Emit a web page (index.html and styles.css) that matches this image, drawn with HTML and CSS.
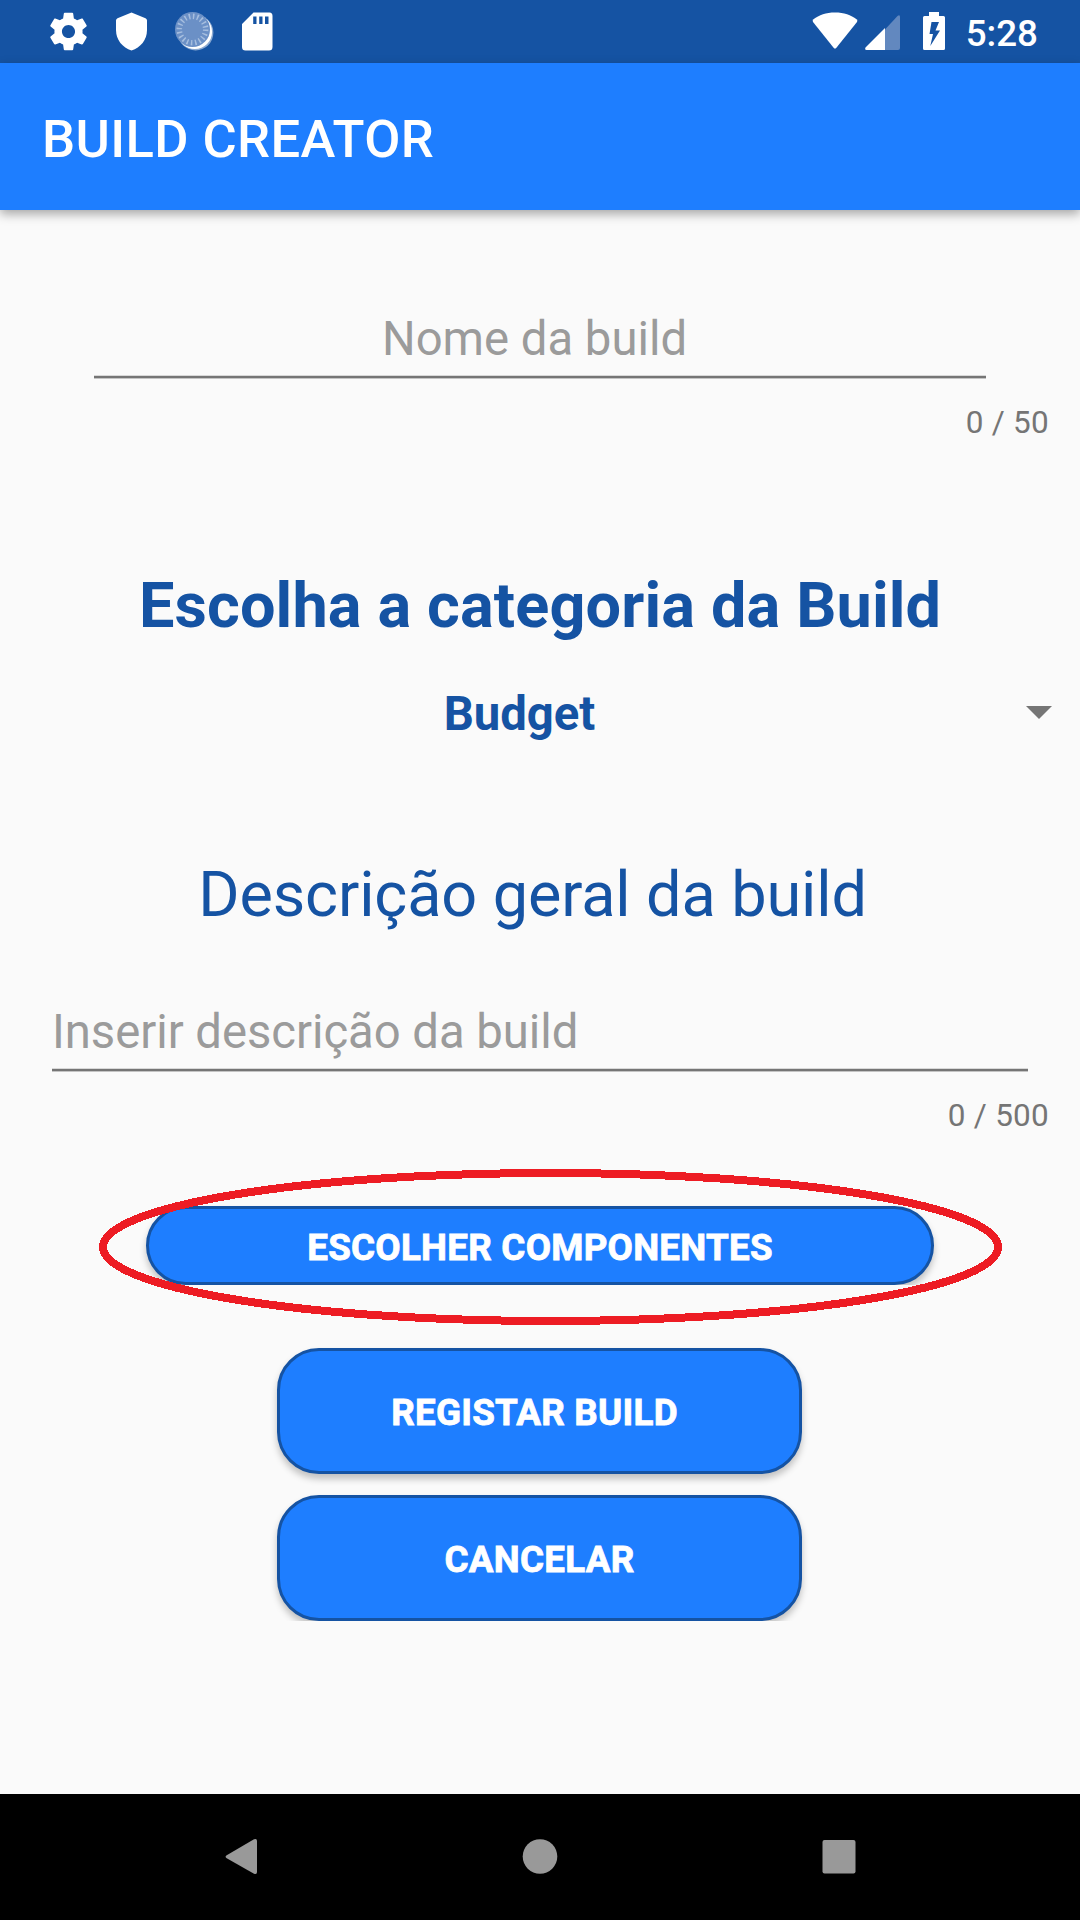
FILE: index.html
```html
<!DOCTYPE html>
<html lang="pt">
<head>
<meta charset="utf-8">
<title>Build Creator</title>
<link rel="stylesheet" href="styles.css">
</head>
<body>
<div class="screen">
  <header class="status-bar">
    <div class="notifications">
      <svg class="icon" viewBox="0 0 24 24"><path fill="#fff" d="M19.43 12.98c.04-.32.07-.64.07-.98s-.03-.66-.07-.98l2.11-1.65c.19-.15.24-.42.12-.64l-2-3.46c-.12-.22-.39-.3-.61-.22l-2.49 1c-.52-.4-1.08-.73-1.69-.98l-.38-2.65C14.46 2.18 14.25 2 14 2h-4c-.25 0-.46.18-.49.42l-.38 2.65c-.61.25-1.17.59-1.69.98l-2.49-1c-.23-.09-.49 0-.61.22l-2 3.46c-.13.22-.07.49.12.64l2.11 1.65c-.04.32-.07.65-.07.98s.03.66.07.98l-2.11 1.65c-.19.15-.24.42-.12.64l2 3.46c.12.22.39.3.61.22l2.49-1c.52.4 1.08.73 1.69.98l.38 2.65c.03.24.24.42.49.42h4c.25 0 .46-.18.49-.42l.38-2.65c.61-.25 1.17-.59 1.69-.98l2.49 1c.23.09.49 0 .61-.22l2-3.46c.12-.22.07-.49-.12-.64l-2.11-1.65zM12 15.5c-1.93 0-3.5-1.57-3.5-3.5s1.57-3.5 3.5-3.5 3.5 1.57 3.5 3.5-1.57 3.5-3.5 3.5z"/></svg>
      <svg class="icon" viewBox="0 0 45 45"><path fill="#fff" d="M22.500 3.500L36.500 9.200Q38 9.900 38 11.500V21C38 31 31.500 38.500 22.500 41.500C13.500 38.500 7 31 7 21V11.500Q7 9.900 8.500 9.200Z"/></svg>
      <svg class="icon" viewBox="0 0 45 45"><circle cx="23.600" cy="23.600" r="17.800" fill="#8aa9d2"/><circle cx="22.800" cy="22.800" r="17.300" fill="#fff"/><circle cx="20.500" cy="20.500" r="17.500" fill="#6b90c6"/><circle cx="20.500" cy="20.500" r="13.200" fill="none" stroke="#a6bedf" stroke-width="5.500" stroke-dasharray="1.500 2.647"/></svg>
      <svg class="icon" viewBox="0 0 45 45"><path fill="#fff" fill-rule="evenodd" d="M18.500 3.500H34.500Q37.500 3.500 37.500 7V38Q37.500 41.500 34 41.500H10.500Q7 41.500 7 38V15ZM18.200 7.500V15H21.500V7.500ZM24.200 7.500V15H27.500V7.500ZM30 7.500V15H33.500V7.500Z"/></svg>
    </div>
    <div class="system">
      <svg class="wifi" viewBox="0 0 46 38"><path fill="#fff" d="M23 0.500C32 .5 39 3.200 44.500 7.200Q46 8.500 45 10L24.200 36Q23 37.200 21.800 36L1 10Q0 8.500 1.500 7.200C7 3.200 14 .5 23 .5Z"/></svg>
      <svg class="signal" viewBox="0 0 35 35"><path fill="#6288bf" d="M20 14.500L32.500 1Q35 -1 35 2V33Q35 35 33 35H20Z"/><path fill="#fff" d="M20 13V35H1.500Q-.5 35 .5 32.500Z"/></svg>
      <svg class="battery" viewBox="0 0 22 38"><path fill="#fff" fill-rule="evenodd" d="M6 0H16V4H20.500Q22 4 22 5.500V36.500Q22 38 20.500 38H1.500Q0 38 0 36.500V5.500Q0 4 1.500 4H6ZM8.500 10L6.500 22H10L7.300 34L17 18.500H12.500L16 10Z"/></svg>
      <span class="clock">5:28</span>
    </div>
  </header>

  <div class="app-bar"><h1 class="app-title">BUILD CREATOR</h1></div>

  <main class="form">
    <div class="field field-name">Nome da build</div>
    <div class="counter">0 / 50</div>

    <h2 class="heading heading-category">Escolha a categoria da Build</h2>
    <div class="spinner">
      <span class="spinner-value">Budget</span>
      <svg class="caret" viewBox="0 0 26 13"><path fill="#757575" d="M0 0H26L13 13Z"/></svg>
    </div>

    <h2 class="heading heading-description">Descrição geral da build</h2>
    <div class="field field-description">Inserir descrição da build</div>
    <div class="counter">0 / 500</div>

    <div class="choose">
      <button class="button button-choose">ESCOLHER COMPONENTES</button>
      <svg class="highlight" viewBox="0 0 903 156"><ellipse cx="451.500" cy="78" rx="447.500" ry="74" fill="none" stroke="#ed1c24" stroke-width="8" shape-rendering="crispEdges"/></svg>
    </div>
    <button class="button button-register">REGISTAR BUILD</button>
    <button class="button button-cancel">CANCELAR</button>
  </main>

  <nav class="nav-bar">
    <svg class="nav-icon" viewBox="0 0 40 40"><path fill="#999" d="M5.300 18.500L33 2.300Q36 1 36 4V35Q36 38 33 36.700L5.300 21Q3.800 19.800 5.300 18.500Z"/></svg>
    <svg class="nav-icon" viewBox="0 0 40 40"><circle cx="20" cy="19.500" r="17.300" fill="#999"/></svg>
    <svg class="nav-icon" viewBox="0 0 40 40"><rect x="3.500" y="3" width="33" height="33.500" rx="2" fill="#999"/></svg>
  </nav>
</div>
</body>
</html>
```
FILE: styles.css
```css
* {
  box-sizing: border-box;
}

body {
  margin: 0;
  font-family: Roboto, "Liberation Sans", sans-serif;
}

svg {
  display: block;
  flex: none;
}

.screen {
  display: flex;
  flex-direction: column;
  width: 1080px;
  height: 1920px;
  overflow: hidden;
  background: #fafafa;
}

.status-bar {
  display: flex;
  justify-content: space-between;
  height: 63px;
  padding: 9px 42px 0 46px;
  background: #1553a3;
}

.notifications {
  display: flex;
  gap: 18px;
}

.icon {
  width: 45px;
  height: 45px;
}

.system {
  display: flex;
  align-items: flex-start;
  color: #fff;
}

.wifi {
  width: 46px;
  height: 38px;
  margin: 3px 7px 0 0;
}

.signal {
  width: 35px;
  height: 35px;
  margin: 6px 23px 0 0;
}

.battery {
  width: 22px;
  height: 38px;
  margin: 3px 21px 0 0;
}

.clock {
  font-size: 36.75px;
  font-weight: 500;
  line-height: 44px;
  margin-top: 3px;
}

.app-bar {
  display: flex;
  align-items: center;
  height: 147px;
  padding: 5px 42px 0;
  background: #1e7eff;
  box-shadow: 0 4px 10px rgba(0, 0, 0, .34);
}

.app-title {
  margin: 0;
  color: #fff;
  font-size: 52.5px;
  font-weight: 500;
  line-height: 62px;
  letter-spacing: .4px;
}

.form {
  display: flex;
  flex-direction: column;
  align-items: center;
  flex: 1;
  padding-top: 97px;
}

.field {
  height: 72px;
  padding-top: 1px;
  color: #9b9b9b;
  font-size: 47.25px;
  line-height: 62px;
  background: linear-gradient(#d8d8d8 1px, #757575 1px 3px, #c4c4c4 3px) bottom / 100% 4px no-repeat;
}

.field-name {
  width: 892px;
  padding-right: 11px;
  text-align: center;
}

.field-description {
  width: 976px;
  letter-spacing: -.04px;
}

.counter {
  align-self: flex-end;
  margin: 25px 31px 0 0;
  color: #757575;
  font-size: 31.5px;
  line-height: 38px;
  letter-spacing: .25px;
}

.heading {
  margin: 0;
  color: #1553a3;
  font-size: 63px;
  line-height: 74px;
}

.heading-category {
  margin-top: 127px;
  letter-spacing: .13px;
}

.heading-description {
  margin: 116px 15px 68px 0;
  font-weight: 400;
  letter-spacing: -.12px;
}

.spinner {
  display: flex;
  align-items: center;
  width: 100%;
  margin-top: 43px;
  padding: 0 28px 0 13px;
  color: #1553a3;
  font-size: 47.25px;
  font-weight: 700;
  line-height: 56px;
}

.spinner-value {
  flex: 1;
  text-align: center;
}

.caret {
  width: 26px;
  height: 13px;
  margin-bottom: 4px;
}

.button {
  flex: none;
  width: 525px;
  height: 126px;
  padding: 4px 0 0;
  border: 3px solid #1553a3;
  border-radius: 42px;
  background: #1e7eff;
  box-shadow: 0 5px 7px rgba(0, 0, 0, .23);
  color: #fff;
  font: 700 36.75px/44px Roboto, "Liberation Sans", sans-serif;
  letter-spacing: .25px;
  -webkit-text-stroke: .8px #fff;
}

.choose {
  position: relative;
  margin-top: 71px;
}

.button-choose {
  display: block;
  width: 788px;
  height: 79px;
  clip-path: inset(-10px -10px 0);
}

.highlight {
  position: absolute;
  top: -37px;
  left: -47px;
  width: 903px;
  height: 156px;
}

.button-register {
  margin: 63px 1px 0 0;
  padding-right: 10px;
}

.button-cancel {
  margin: 21px 1px 0 0;
  clip-path: inset(-10px -10px 0);
}

.nav-bar {
  display: flex;
  justify-content: center;
  gap: 259px;
  height: 126px;
  padding: 43px 1px 0 0;
  background: #000;
}

.nav-icon {
  width: 40px;
  height: 40px;
}
```
